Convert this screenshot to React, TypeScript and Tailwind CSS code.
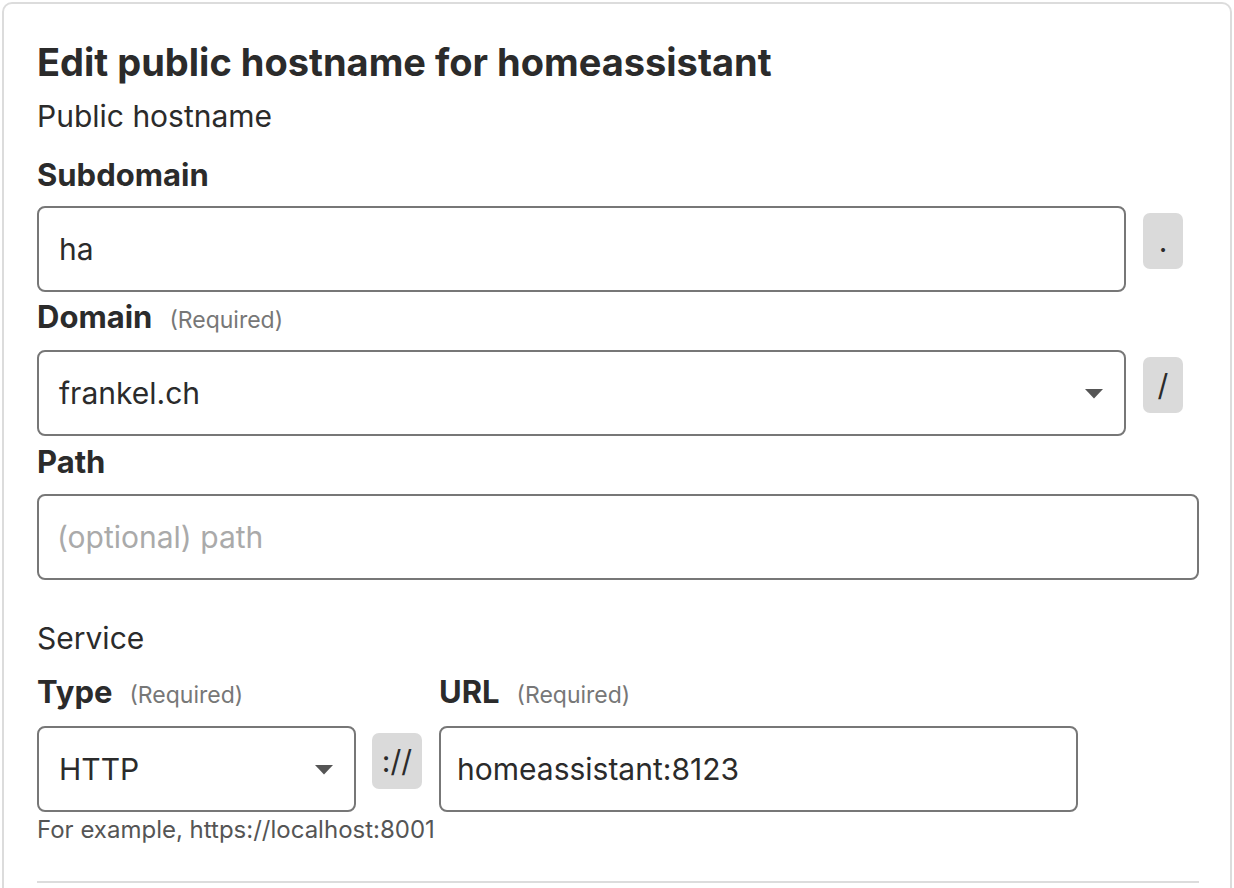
import React from "react";

const Arrow = () => (
  <svg width="20" height="11" viewBox="0 0 20 11" className="shrink-0">
    <path d="M1 1 L19 1 L10 10.5 Z" fill="#555555" />
  </svg>
);

export default function App() {
  return (
    <div
      className="w-[1234px] h-[888px] bg-white overflow-hidden pt-[2px] pl-[2px] pr-[2px]"
      style={{ fontFamily: "Inter, 'Noto Sans', sans-serif" }}
    >
      <div className="h-[920px] border-2 border-[#dcdcdc] rounded-[10px] pl-[33px] pr-[31px] pt-[36px] text-[#2b2b2b]">
        <h1 className="text-[38px] leading-[44px] font-bold">
          Edit public hostname for homeassistant
        </h1>
        <div className="text-[30px] leading-[36px] mt-[14px]">Public hostname</div>

        <div className="text-[31px] leading-[36px] font-bold mt-[23px]">Subdomain</div>
        <div className="flex items-start pr-[16px] mt-[13px]">
          <div className="flex-1 h-[86px] border-2 border-[#777] rounded-[8px] flex items-center px-[20px] text-[30px]">
            ha
          </div>
          <div className="w-[40px] h-[56px] ml-[17px] mt-[7px] bg-[#dadada] rounded-[7px] flex items-center justify-center text-[30px]">
            .
          </div>
        </div>

        <div className="flex items-baseline gap-[17px] h-[36px] leading-[36px] mt-[7px]">
          <span className="text-[31px] font-bold">Domain</span>
          <span className="text-[23px] text-[#777]">(Required)</span>
        </div>
        <div className="flex items-start pr-[16px] mt-[15px]">
          <div className="flex-1 h-[86px] border-2 border-[#777] rounded-[8px] flex items-center justify-between pl-[20px] pr-[20px] text-[30px]">
            <span>frankel.ch</span>
            <Arrow />
          </div>
          <div className="w-[40px] h-[56px] ml-[17px] mt-[7px] bg-[#dadada] rounded-[7px] flex items-center justify-center text-[30px]">
            /
          </div>
        </div>

        <div className="text-[31px] leading-[36px] font-bold mt-[8px]">Path</div>
        <div className="h-[86px] border-2 border-[#777] rounded-[8px] flex items-center px-[18px] text-[30px] text-[#aaaaaa] mt-[14px]">
          (optional) path
        </div>

        <div className="text-[30px] leading-[36px] mt-[40px]">Service</div>

        <div className="flex items-start mt-[18px]">
          <div className="w-[319px]">
            <div className="flex items-baseline gap-[17px] h-[36px] leading-[36px]">
              <span className="text-[31px] font-bold">Type</span>
              <span className="text-[23px] text-[#777]">(Required)</span>
            </div>
            <div className="h-[86px] border-2 border-[#777] rounded-[8px] flex items-center justify-between pl-[20px] pr-[20px] text-[30px] mt-[16px]">
              <span>HTTP</span>
              <Arrow />
            </div>
          </div>
          <div className="w-[50px] h-[56px] ml-[16px] mt-[59px] bg-[#dadada] rounded-[7px] flex items-center justify-center text-[30px]">
            ://
          </div>
          <div className="w-[639px] ml-[17px]">
            <div className="flex items-baseline gap-[17px] h-[36px] leading-[36px]">
              <span className="text-[31px] font-bold">URL</span>
              <span className="text-[23px] text-[#777]">(Required)</span>
            </div>
            <div className="h-[86px] border-2 border-[#777] rounded-[8px] flex items-center px-[16px] text-[30px] mt-[16px]">
              homeassistant:8123
            </div>
          </div>
        </div>
        <div className="text-[24px] leading-[28px] text-[#555] mt-[4px]">
          For example, https://localhost:8001
        </div>
        <div className="h-[2px] bg-[#dcdcdc] mt-[37px]" />
      </div>
    </div>
  );
}
